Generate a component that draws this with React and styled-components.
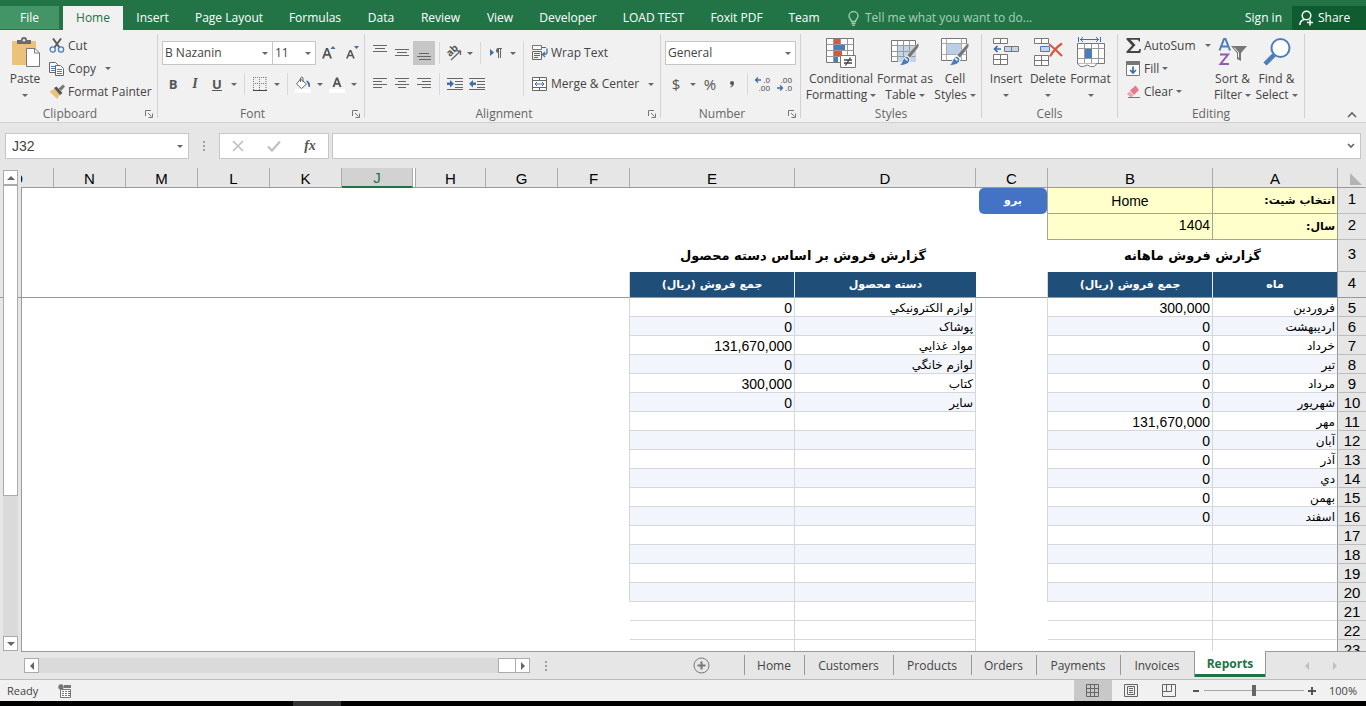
import React, { memo } from 'react';
import styled, { createGlobalStyle, css } from 'styled-components';

const GlobalStyle = createGlobalStyle`
  *, *::before, *::after {
    box-sizing: border-box;
  }
  body {
    margin: 0;
    background: #e6e6e6;
  }
  button, input, select {
    margin: 0;
    padding: 0;
    border: 0;
    border-radius: 0;
    background: none;
    color: inherit;
    font: inherit;
    outline: none;
  }
`;

const Window = styled.div`
  display: flex;
  flex-direction: column;
  height: 100vh;
  overflow: hidden;
  color: #444;
  font-family: 'Open Sans', 'Noto Sans', sans-serif;
  font-size: 12px;
  line-height: 16px;
  white-space: nowrap;
`;

/* ---------- tabs on top ---------- */

const TopBar = styled.nav`
  display: flex;
  flex: none;
  height: 30px;
  padding-top: 6px;
  background: #227447;
  color: #fff;
`;

const TopTab = styled.button`
  width: ${({ $w }) => $w}px;
  height: 24px;
  ${({ $file }) =>
    $file &&
    css`
      height: 23px;
      margin-right: 4px;
      background: #439467;
    `}
  ${({ $active }) =>
    $active &&
    css`
      background: #f1f1f1;
      color: #217346;
    `}
`;

const TellMe = styled.label`
  display: flex;
  flex: 1;
  align-items: center;
  gap: 6px;
  padding-left: 15px;
  color: #a5d0b6;

  input {
    flex: 1;
    min-width: 0;
  }
  input::placeholder {
    color: #a5d0b6;
    opacity: 1;
  }
`;

const SignIn = styled.button`
  padding: 0 10px;
`;

const Share = styled.button`
  display: flex;
  align-items: center;
  gap: 4px;
  width: 74px;
  padding-left: 7px;
  background: #0e5c2f;
`;

/* ---------- ribbon ---------- */

const RibbonBar = styled.div`
  display: flex;
  flex: none;
  height: 93px;
  padding-top: 4px;
  border-bottom: 1px solid #d2d2d2;
  background: #f1f1f1;
`;

const GroupBox = styled.section`
  display: flex;
  flex-direction: column;
  width: ${({ $w }) => $w}px;
  height: 84px;
  border-right: 1px solid #d2d2d2;
`;

const GroupBody = styled.div`
  display: flex;
  flex: none;
  height: 76px;
  padding-left: ${({ $pad }) => $pad}px;
`;

const GroupFooter = styled.div`
  display: flex;
  align-items: center;
  height: 8px;
  color: #666;

  span {
    flex: 1;
    text-align: center;
  }
  button {
    width: 17px;
    line-height: 8px;
  }
  svg {
    display: block;
    margin: 0 auto;
  }
`;

const Stack = styled.div`
  display: flex;
  flex-direction: column;
  padding-left: ${({ $pad }) => $pad || 0}px;
`;

const TwoRows = styled.div`
  display: flex;
  flex-direction: column;
  gap: 7px;
  padding: 7px 0 0 ${({ $pad }) => $pad || 0}px;
`;

const Tools = styled.div`
  display: flex;
  align-items: center;
  height: 24px;
`;

const Divider = styled.i`
  width: 1px;
  height: ${({ $h }) => $h || 22}px;
  margin: 0 4px;
  background: #d8d8d8;
`;

const IconButton = styled.button`
  display: flex;
  align-items: center;
  justify-content: center;
  width: ${({ $w }) => $w || 22}px;
  height: 24px;
  background: ${({ $on }) => ($on ? '#c6c6c6' : 'none')};
`;

const SmallButton = styled.button`
  display: flex;
  align-items: center;
  gap: 3px;
  height: ${({ $h }) => $h || 23}px;

  .caret {
    margin-left: ${({ $far }) => ($far ? 6 : 0)}px;
  }
`;

const Big = styled.button`
  display: flex;
  flex-direction: column;
  align-items: center;
  width: ${({ $w }) => $w}px;
  padding-top: 2px;

  > svg {
    margin-bottom: 3px;
  }
`;

const BigLine = styled.span`
  display: flex;
  align-items: center;
  gap: 3px;
  height: 16px;
`;

const SelectBox = styled.div`
  display: flex;
  align-items: center;
  width: ${({ $w }) => $w}px;
  height: 24px;
  padding: 0 4px 0 2px;
  border: 1px solid #c6c6c6;
  background: #fff;

  select {
    flex: 1;
    min-width: 0;
    appearance: none;
  }
  & + & {
    margin-left: -1px;
  }
`;

const Glyph = styled.b`
  color: #555;
  font-size: ${({ $size }) => $size || 13}px;
  font-weight: ${({ $light }) => ($light ? 400 : 700)};
  ${({ $serif }) =>
    $serif &&
    css`
      font-family: 'Liberation Serif', serif;
      font-style: italic;
    `}
  text-decoration: ${({ $underline }) => ($underline ? 'underline' : 'none')};
`;

const Collapse = styled.button`
  align-self: flex-end;
  margin: 0 9px 0 auto;
  height: 16px;
`;

/* ---------- formula bar ---------- */

const FormulaRow = styled.div`
  display: flex;
  flex: none;
  height: 45px;
  padding: 10px 5px 9px;
`;

const Field = styled.div`
  display: flex;
  align-items: center;
  width: ${({ $w }) => ($w ? `${$w}px` : 'auto')};
  flex: ${({ $w }) => ($w ? 'none' : 1)};
  padding: 0 5px 0 6px;
  border: 1px solid #c6c6c6;
  background: #fff;

  input {
    flex: 1;
    min-width: 0;
    font-family: 'Liberation Sans', sans-serif;
    font-size: 14px;
  }
`;

const FxField = styled(Field)`
  justify-content: space-around;
  margin-right: 3px;
  padding: 0;
`;

const Dots = styled.span`
  display: flex;
  flex-direction: column;
  align-items: center;
  justify-content: center;
  gap: 2px;
  width: ${({ $w }) => $w}px;

  i {
    width: 2px;
    height: 2px;
    background: #a0a0a0;
  }
`;

/* ---------- sheet ---------- */

const SheetArea = styled.main`
  display: flex;
  flex: 1;
  min-height: 0;
  overflow: hidden;
`;

// the grey line is the frozen pane border, it runs under the scroll bar too
const VScroll = styled.div`
  display: flex;
  flex: none;
  flex-direction: column;
  width: 21px;
  padding: 2px 3px 0;
  background: linear-gradient(#999, #999) 0 129px / 100% 1px no-repeat;
`;

const ScrollButton = styled.button`
  display: flex;
  flex: none;
  align-items: center;
  justify-content: center;
  width: 15px;
  height: 15px;
  border: 1px solid #ababab;
  background: #fff;
`;

const VTrack = styled.div`
  flex: 1;
  background: #dadada;
`;

const VThumb = styled.div`
  height: 69%;
  border: 1px solid #ababab;
  background: #fff;
`;

const GridWrap = styled.div`
  flex: 1;
  min-width: 0;
  overflow: hidden;
`;

const Grid = styled.table`
  width: 100%;
  table-layout: fixed;
  border-spacing: 0;
  color: #000;
  font-family: 'Liberation Sans', 'DejaVu Sans', sans-serif;
  font-size: 14px;
  line-height: 16px;

  th, td {
    padding: 0;
    overflow: hidden;
    font-weight: 400;
  }
`;

const ColHead = styled.th`
  && {
    padding-top: 2px;
  }
  height: 20px;
  border-right: 1px solid ${({ $corner }) => ($corner ? '#e6e6e6' : '#ababab')};
  border-bottom: 1px solid #999;
  background: #e6e6e6;
  font-size: 15px;
  text-align: center;
  ${({ $gap }) =>
    $gap &&
    css`
      background: #fff;
    `}
  ${({ $active }) =>
    $active &&
    css`
      border-bottom: 2px solid #217346;
      background: #d2d2d2;
      color: #217346;
    `}
  ${({ $cut }) =>
    $cut &&
    css`
      && {
        padding-right: 30px;
      }
      text-align: right;
    `}
  svg {
    display: block;
    margin: 0 3px 0 auto;
  }
`;

const RowHead = styled.th`
  && {
    padding: ${({ $tall }) => ($tall ? '0 0 3px' : '2px 0 0')};
  }
  height: ${({ $h }) => $h}px;
  border-bottom: 1px solid ${({ $frozen }) => ($frozen ? '#999' : '#bdbdbd')};
  background: #e6e6e6;
  font-size: 15px;
  text-align: center;
`;

const Cell = styled.td`
  border-right: ${({ $line }) => ($line ? `1px solid ${$line}` : 0)};
  border-bottom: ${({ $frozen }) => ($frozen ? '1px solid #999' : 0)};
  background: #fff;

  &:last-child {
    border-left: 1px solid #999;
  }
`;

const DataCell = styled(Cell)`
  && {
    padding: 2px 2px 0;
  }
  border-right: 1px solid ${({ $edge }) => ($edge ? '#999' : '#d4d7dc')};
  border-bottom: 1px solid #d4d7dc;
  background: ${({ $band }) => ($band ? '#f2f5fb' : '#fff')};
  font-family: ${({ $text }) => ($text ? "'DejaVu Sans', sans-serif" : 'inherit')};
  font-size: ${({ $text }) => ($text ? 12 : 14)}px;
  text-align: right;
`;

const YellowCell = styled(Cell)`
  && {
    padding: 0 2px;
    font-weight: ${({ $text }) => ($text ? 700 : 400)};
  }
  border-right: 1px solid ${({ $text }) => ($text ? '#999' : '#a6a68c')};
  border-bottom: 1px solid #a6a68c;
  background: #ffffcc;
  font-family: ${({ $text }) => ($text ? "'DejaVu Sans', sans-serif" : 'inherit')};
  font-size: ${({ $text }) => ($text ? 11 : 14)}px;
  text-align: ${({ $center }) => ($center ? 'center' : 'right')};
  vertical-align: ${({ $top }) => ($top ? 'top' : 'middle')};
`;

const YearValue = styled.div`
  padding-top: 3px;
`;

const TitleCell = styled(Cell)`
  && {
    font-weight: 700;
  }
  font-family: 'DejaVu Sans', sans-serif;
  font-size: 13px;
  text-align: center;
`;

const HeadCell = styled(Cell)`
  && {
    font-weight: 700;
  }
  background: #1f4e79;
  color: #fff;
  font-family: 'DejaVu Sans', sans-serif;
  font-size: 11px;
  text-align: center;
`;

const GoButton = styled.button`
  display: block;
  width: 68px;
  height: 26px;
  border-radius: 5px;
  background: #4472c4;
  color: #fff;
  font-family: 'DejaVu Sans', sans-serif;
  font-size: 11px;
  font-weight: 700;
`;

/* ---------- sheet tabs ---------- */

const SheetBar = styled.div`
  display: flex;
  flex: none;
  height: 28px;
  padding-left: 21px;
`;

const ScrollPart = styled.div`
  display: flex;
  flex: 1;
  align-items: center;
  padding-left: 3px;
  border-top: 1px solid #999;
`;

const ArrowsPart = styled.div`
  display: flex;
  align-items: center;
  width: 100px;
  padding-left: 27px;
  border-top: 1px solid #999;
`;

const HTrack = styled.div`
  display: flex;
  flex: 1;
  justify-content: flex-end;
  height: 15px;
  background: #dadada;
`;

const HThumb = styled.div`
  width: 17px;
  border: 1px solid #ababab;
  border-right: 0;
  background: #fff;
`;

const AddSheet = styled.button`
  display: flex;
  margin: 0 34px 0 131px;
`;

const SheetTab = styled.button`
  width: ${({ $w }) => $w}px;
  height: 28px;
  border-top: 1px solid #999;
  ${({ $active }) =>
    $active
      ? css`
          height: 26px;
          border: solid #999;
          border-width: 0 1px;
          background: #fff;
          box-shadow: inset 0 -3px 0 #217346;
          color: #217346;
          font-weight: 700;
        `
      : css`
          background: linear-gradient(#999, #999) 0 3px / 1px 20px no-repeat;
        `}
`;

const ArrowButton = styled.button`
  display: flex;
  justify-content: center;
  width: 28px;
`;

/* ---------- status bar ---------- */

const StatusBar = styled.footer`
  display: flex;
  flex: none;
  align-items: center;
  height: 22px;
  padding-left: 7px;
  border-top: 1px solid #bcbcbc;
  background: #f1f1f1;
  font-size: 11px;
`;

const StatusIcon = styled.button`
  display: flex;
  margin: 0 auto 0 20px;
`;

const ViewButton = styled.button`
  display: flex;
  align-items: center;
  justify-content: center;
  width: 38px;
  height: 21px;
  background: ${({ $on }) => ($on ? '#c8c8c8' : 'none')};
`;

const ZoomRange = styled.input`
  width: 100px;
  height: 13px;
  appearance: none;
  background: linear-gradient(#a6a6a6, #a6a6a6) 0 6px / 100% 1px no-repeat;

  &::-webkit-slider-thumb {
    appearance: none;
    width: 4px;
    height: 11px;
    background: #666;
  }
`;

const ZoomStep = styled.button`
  display: flex;
  margin: 0 4px;
`;

const ZoomValue = styled.button`
  width: 46px;
`;

const Taskbar = styled.div`
  flex: none;
  height: 5px;
  padding-left: 293px;
  background: #000;

  i {
    display: block;
    width: 48px;
    height: 5px;
    background: #333;
  }
`;

/* ---------- icons ---------- */

const Caret = () => (
  <svg className="caret" width="6" height="3" viewBox="0 0 6 3">
    <path d="M0 0h6L3 3z" fill="#666" />
  </svg>
);

const arrows = {
  up: 'M0 6h8L4 2z',
  down: 'M0 2h8L4 6z',
  left: 'M6 0v8L2 4z',
  right: 'M2 0v8l4-4z',
};

const Arrow = ({ to, color = '#666' }) => (
  <svg width="8" height="8" viewBox="0 0 8 8">
    <path d={arrows[to]} fill={color} />
  </svg>
);

const LauncherIcon = () => (
  <svg width="8" height="8" viewBox="0 0 8 8" fill="none" stroke="#777">
    <path d="M.5 6V.5H6M3 3l3.5 3.5M7.5 3.5v4h-4" />
  </svg>
);

const BulbIcon = () => (
  <svg width="11" height="15" viewBox="0 0 11 15" fill="none" stroke="#a5d0b6" strokeWidth="1.3">
    <path d="M3.5 10.5C3.5 8.5 1 7.5 1 5a4.5 4.3 0 0 1 9 0c0 2.5-2.5 3.5-2.5 5.5zM3.5 12.5h4M4.2 14.3h2.6" />
  </svg>
);

const PersonIcon = () => (
  <svg width="15" height="16" viewBox="0 0 15 16" fill="none" stroke="#fff" strokeWidth="1.5">
    <circle cx="7.5" cy="5.5" r="4.3" />
    <path d="M5.5 9.5C3 10 1 12 .8 15M8 12.5h6M11 9.5v6" />
  </svg>
);

const PasteIcon = () => (
  <svg width="30" height="32" viewBox="0 0 30 32">
    <path d="M2 5h24v24H2z" fill="#ecc27a" />
    <path d="M7 4h4a3 3 0 0 1 6 0h4v4H7z" fill="#6b6b6b" />
    <circle cx="14" cy="4.2" r="1.2" fill="#f1f1f1" />
    <path d="M16.5 12.5h8.500l4.500 4.500v13.500H16.500z" fill="#fff" stroke="#777" />
    <path d="M24.5 12.5V17H29" fill="none" stroke="#777" />
  </svg>
);

const CutIcon = () => (
  <svg width="16" height="16" viewBox="0 0 16 16" fill="none">
    <path d="M4 .5l6.500 9M12 .5L5.500 9.500" stroke="#5c5c5c" strokeWidth="2" />
    <circle cx="3.700" cy="11.500" r="2.600" stroke="#4a7ebb" strokeWidth="1.300" />
    <circle cx="12" cy="11.500" r="2.600" stroke="#4a7ebb" strokeWidth="1.300" />
  </svg>
);

const CopyIcon = () => (
  <svg width="16" height="16" viewBox="0 0 16 16" fill="#fff" stroke="#666">
    <path d="M.5 1.500h6l2 2v8h-8z" />
    <path d="M2 5.500h4M2 7.500h4M2 9.500h4" stroke="#4a7ebb" />
    <path d="M6.500 4.500h5l3 3v7h-8z" />
    <path d="M8 8.500h5M8 10.500h5M8 12.500h5" stroke="#4a7ebb" />
  </svg>
);

const PainterIcon = () => (
  <svg width="16" height="16" viewBox="0 0 16 16">
    <path d="M.5 7.500L6 4.500l5.500 5.500-3.500 5z" fill="#ecc27a" />
    <path d="M5 4L7.500 2.500l6 6.500-2.500 2z" fill="#555" />
    <path d="M9.500 4.500L14 .5l2 2-4 4.500z" fill="#777" />
  </svg>
);

const GrowIcon = ({ small }) => (
  <svg width="16" height="16" viewBox="0 0 16 16">
    {small ? (
      <path
        d="M2 13.500L5.500 5h1.800l3.500 8.500H9l-.8-2.200H4.600l-.8 2.200zm3.100-3.700h2.600L6.400 6.800z"
        fill="#555"
        fillRule="evenodd"
      />
    ) : (
      <path d="M1 13.500L5 3h2l4 10.500H9l-1-2.800H4l-1 2.800zM4.600 9h2.800L6 5z" fill="#555" fillRule="evenodd" />
    )}
    <path d={small ? 'M10 1h5l-2.500 3z' : 'M9.500 4h5L12 1z'} fill="#3c6ea8" />
  </svg>
);

const BordersIcon = () => (
  <svg width="14" height="14" viewBox="0 0 14 14" fill="none" stroke="#777">
    <path d="M0 .5h14M0 6.500h14M.5 0v13M6.500 0v13M13 0v13" strokeDasharray="1 1" />
    <path d="M0 13.500h14" stroke="#444" />
  </svg>
);

const FillColorIcon = () => (
  <svg width="16" height="17" viewBox="0 0 16 17">
    <path d="M5.500 3L11.500 8l-5 4.500L1.500 8z" fill="#fff" stroke="#666" />
    <path d="M5.500 6V2q1.500-2 2.500 0v4" fill="none" stroke="#666" />
    <path d="M11 4.500q4.500 0 4 6.500-2 .5-2-3z" fill="#3c6ea8" />
    <path d="M0 13h16v4H0z" fill="#fff" />
  </svg>
);

const FontColorIcon = () => (
  <svg width="16" height="17" viewBox="0 0 16 17">
    <path
      d="M3.500 11L7 1.500h2l3.500 9.500h-2l-.8-2.200H6.300L5.500 11zm3.400-4h2.200L8 3.700z"
      fill="#555"
      fillRule="evenodd"
    />
    <path d="M0 13h16v4H0z" fill="#fff" />
  </svg>
);

const lineSets = {
  top: 'M0 1.500h14M2 4.500h10M0 7.500h14',
  middle: 'M0 5.500h14M2 8.500h10M0 11.500h14',
  bottom: 'M2 9.500h10M0 12.500h14M2 15.500h12',
  left: 'M0 3.500h14M0 6.500h9M0 9.500h14M0 12.500h9',
  center: 'M0 3.500h14M3 6.500h8M0 9.500h14M3 12.500h8',
  right: 'M0 3.500h14M5 6.500h9M0 9.500h14M5 12.500h9',
};

const LinesIcon = ({ kind }) => (
  <svg width="14" height="18" viewBox="0 0 14 18" stroke="#666">
    <path d={lineSets[kind]} />
  </svg>
);

const IndentIcon = ({ out }) => (
  <svg width="16" height="14" viewBox="0 0 16 14">
    <path d="M0 1.500h16M8 4.500h8M8 7.500h8M8 10.500h8M0 12.500h16" stroke="#666" />
    <path d={out ? 'M0 6.800L4 3v2.500h3v2.500H4V10.500z' : 'M7 6.800L3 3v2.500H0v2.500h3V10.500z'} fill="#3c6ea8" />
  </svg>
);

const OrientationIcon = () => (
  <svg width="18" height="18" viewBox="0 0 18 18">
    <text x="1" y="10" transform="rotate(-45 7 7)" fontSize="10" fontWeight="700" fill="#555">
      ab
    </text>
    <path d="M6 16L15.500 7M11.500 7h4v4" fill="none" stroke="#666" strokeWidth="1.300" />
  </svg>
);

const DirectionIcon = () => (
  <svg width="14" height="12" viewBox="0 0 14 12">
    <path d="M1 2l4 3.500L1 9z" fill="#3c6ea8" />
    <path d="M9.500 11V1.500M11.500 11V1.500M8.500 1.500H13" stroke="#666" />
    <path d="M9.500 1a2.500 2.500 0 0 0 0 5z" fill="#666" />
  </svg>
);

const WrapIcon = () => (
  <svg width="16" height="16" viewBox="0 0 16 16" fill="none" stroke="#666">
    <path d="M.5 4.500v-4h9v4z" fill="#fff" stroke="#4a7ebb" />
    <path d="M9 2.500h5M.5 6.500h9v8h-9z" />
    <path d="M2 8.500h6M2 10.500h6M2 12.500h4" />
    <path d="M15 3.500v4q0 2-4 2M13 7l-2.500 2.500L13 12" stroke="#3c6ea8" strokeWidth="1.300" />
  </svg>
);

const MergeIcon = () => (
  <svg width="16" height="16" viewBox="0 0 16 16" fill="none" stroke="#666">
    <path d="M.5 1.500h14v13H.5zM.5 4.500h14M.5 11.500h14M7.500 1.500v3M7.500 11.500v3" fill="#fff" />
    <path d="M3 8h9M5 6L3 8l2 2M10 6l2 2-2 2" stroke="#3c6ea8" />
  </svg>
);

const CommaIcon = () => (
  <svg width="6" height="9" viewBox="0 0 6 9">
    <path d="M3 1a2 2 0 0 1 2 2q0 3-3.500 4.500l-.3-.8Q3 6 3 5a2 2 0 0 1 0-4z" fill="#555" />
  </svg>
);

const DecimalIcon = ({ more }) => (
  <svg width="18" height="20" viewBox="0 0 18 20" fontSize="8" fill="#444">
    <text x="16" y="9" textAnchor="end">
      {more ? '.0' : '.00'}
    </text>
    <text x="16" y="17" textAnchor="end">
      {more ? '.00' : '.0'}
    </text>
    <path
      d={more ? 'M7 6H1.500M4 3.500L1.500 6 4 8.500' : 'M1 14h5.500M4 11.500L6.500 14 4 16.500'}
      fill="none"
      stroke="#3c6ea8"
      strokeWidth="1.300"
    />
  </svg>
);

const ConditionalIcon = () => (
  <svg width="30" height="32" viewBox="0 0 30 32">
    <path d="M.5 2.500h27v24H.5z" fill="#fff" stroke="#777" />
    <path d="M.5 8.500h27M.5 14.500h27M.5 20.500h27M7.500 2.500v24M14.500 2.500v24M21.500 2.500v24" stroke="#999" />
    <path d="M8 3h6v5H8zM8 15h8v5H8z" fill="#d35a3c" />
    <path d="M8 9h11v5H8zM8 21h4v5H8z" fill="#4a7ebb" />
    <path d="M14.500 19.500h15v12h-15z" fill="#fff" stroke="#777" />
    <path d="M18 24h8M18 27h8M24.500 21.500l-5 8" stroke="#444" strokeWidth="1.300" />
  </svg>
);

const Brush = () => (
  <g>
    <path d="M29 7q2 2 0 5l-8 10-3-3z" fill="#777" stroke="#f1f1f1" strokeWidth=".6" />
    <path d="M18 20l3 3q0 7-12 6.500 4-1.500 4.500-5 1-3.500 4.500-4.500z" fill="#4a7ebb" stroke="#f1f1f1" />
    <path d="M16 22l2.500 2.500" stroke="#fff" strokeWidth="1.500" />
  </g>
);

const TableIcon = () => (
  <svg width="32" height="32" viewBox="0 0 32 32">
    <path d="M2.500 4.500h24v21h-24z" fill="#fff" stroke="#777" />
    <path d="M9 10h18v16H9z" fill="#c3d3e8" />
    <path d="M2.500 9.500h24M2.500 15.500h24M2.500 20.500h24M8.500 4.500v21M14.500 4.500v21M20.500 4.500v21" stroke="#999" />
    <Brush />
  </svg>
);

const CellStylesIcon = () => (
  <svg width="32" height="32" viewBox="0 0 32 32">
    <path d="M2.500 2.500h25v22h-25z" fill="#fff" stroke="#777" />
    <path d="M2.500 7.500h25M2.500 18.500h25M7.500 2.500v22M22.500 2.500v22" stroke="#aaa" />
    <path d="M8 8h14v10H8z" fill="#b9cfe8" />
    <Brush />
  </svg>
);

const InsertIcon = () => (
  <svg width="28" height="32" viewBox="0 0 28 32">
    <path
      d="M1.500 2.500h14v5h-14zM8.500 2.500v5M1.500 18.500h14v10h-14zM1.500 23.500h14M8.500 18.500v10"
      fill="#fff"
      stroke="#777"
    />
    <path d="M12.500 10.500h14v5h-14zM19.500 10.500v5" fill="#c3d3e8" stroke="#777" />
    <path d="M9 13H3M5.500 10L2.500 13l3 3" fill="none" stroke="#3c6ea8" strokeWidth="1.700" />
  </svg>
);

const DeleteIcon = () => (
  <svg width="30" height="32" viewBox="0 0 30 32">
    <path
      d="M1.500 2.500h14v5h-14zM8.500 2.500v5M1.500 19.500h14v10h-14zM1.500 24.500h14M8.500 19.500v10"
      fill="#fff"
      stroke="#777"
    />
    <path d="M7.500 10.500h9v5h-9z" fill="#c3d3e8" stroke="#4a7ebb" />
    <path d="M16 8q6 5 13 12M29 7.500q-7 4.500-12 13" fill="none" stroke="#d8573c" strokeWidth="2.200" />
  </svg>
);

const FormatIcon = () => (
  <svg width="30" height="32" viewBox="0 0 30 32">
    <path d="M1.500 7.500h27v20h-27z" fill="#fff" stroke="#777" />
    <path d="M1.500 12.500h27M1.500 22.500h27M8.500 7.500v20M15.500 7.500v20M22.500 7.500v20" stroke="#999" />
    <path d="M9 13h7v9H9z" fill="#4a7ebb" />
    <path d="M1.500 27.500q2 4 6 3l4-1.500 3 1.500q5 1 6-3" fill="#fff" stroke="#777" />
    <path d="M2.500 1v5M24.500 1v5M4 3.500h19M7 1L4.500 3.500 7 6M20 1l2.500 2.500L20 6" fill="none" stroke="#3c6ea8" />
  </svg>
);

const SumIcon = () => (
  <svg width="15" height="15" viewBox="0 0 15 15">
    <path
      d="M.5 0h13.500v3.500h-1l-1-1.700H4.500L9.500 7l-5.500 6h8.500l1-2H15l-.7 4H.5v-1.500L6 7.500.5 1.500z"
      fill="#444"
    />
  </svg>
);

const FillIcon = () => (
  <svg width="15" height="16" viewBox="0 0 15 16">
    <path d="M.5.5h13v14H.5z" fill="#fff" stroke="#777" />
    <path d="M0 0h14v4H0z" fill="#777" />
    <path d="M7 5.500V12M4 9l3 3 3-3" fill="none" stroke="#3c6ea8" strokeWidth="1.700" />
  </svg>
);

const ClearIcon = () => (
  <svg width="15" height="14" viewBox="0 0 15 14">
    <path d="M4 5.500L9.500.5l3.500 4.500-5 5z" fill="#e8788c" />
    <path d="M3.500 6.500L7.500 10.500 5 12.500 1 9z" fill="#f0a0ae" />
    <path d="M2 12.500h12" stroke="#777" />
  </svg>
);

const SortIcon = () => (
  <svg width="30" height="32" viewBox="0 0 30 32">
    <path d="M1.500 14.500L6 3h1.500L12 14.500M3.200 10.500h7" fill="none" stroke="#4a7ebb" strokeWidth="2" />
    <path d="M2 18.500h8L2.500 28H11" fill="none" stroke="#8f5bb5" strokeWidth="2" />
    <path d="M13 10h16l-6 7v8l-4-2v-6z" fill="#777" />
    <path d="M16 11.500l4.500 5v5" stroke="#f1f1f1" fill="none" />
  </svg>
);

const FindIcon = () => (
  <svg width="30" height="32" viewBox="0 0 30 32">
    <path d="M12 19L3 28" stroke="#4a7ebb" strokeWidth="4.500" />
    <circle cx="18.500" cy="12" r="9" fill="#fff" stroke="#4a7ebb" strokeWidth="2" />
  </svg>
);

const MacroIcon = () => (
  <svg width="14" height="14" viewBox="0 0 14 14">
    <path d="M2.500 5.500h10v8h-10z" fill="#fff" stroke="#777" />
    <path d="M6 1h7v3H6z" fill="#777" />
    <circle cx="3" cy="3" r="2.700" fill="#777" />
    <path d="M4 7.500h8M4 9.500h8M4 11.500h8" stroke="#777" strokeDasharray="2 1" />
  </svg>
);

const viewPaths = {
  normal: 'M.5.5h12v12H.5zM.5 4.500h12M.5 8.500h12M4.500.5v12M8.500.5v12',
  layout: 'M.5.5h13v12H.5zM3.500 2.500h7v8h-7zM5 4.500h4M5 6.500h4M5 8.500h4',
  breaks: 'M.5.5h13v12H.5zM4.500.5v7M9.500.5v7M.5 7.500h9',
};

const ViewIcon = ({ kind }) => (
  <svg width="14" height="13" viewBox="0 0 14 13" fill="none" stroke="#666">
    <path d={viewPaths[kind]} />
  </svg>
);

/* ---------- data ---------- */

const topTabs = [
  { name: 'File', w: 59, file: true },
  { name: 'Home', w: 60, active: true },
  { name: 'Insert', w: 59 },
  { name: 'Page Layout', w: 94 },
  { name: 'Formulas', w: 78 },
  { name: 'Data', w: 54 },
  { name: 'Review', w: 65 },
  { name: 'View', w: 54 },
  { name: 'Developer', w: 82 },
  { name: 'LOAD TEST', w: 89 },
  { name: 'Foxit PDF', w: 77 },
  { name: 'Team', w: 58 },
];

const columns = [
  { name: 'A', w: 125 },
  { name: 'B', w: 165 },
  { name: 'C', w: 72 },
  { name: 'D', w: 181 },
  { name: 'E', w: 165 },
  { name: 'F', w: 72 },
  { name: 'G', w: 72 },
  { name: 'H', w: 70 },
  { name: '', w: 3, gap: true },
  { name: 'J', w: 71, active: true },
  { name: 'K', w: 72 },
  { name: 'L', w: 72 },
  { name: 'M', w: 72 },
  { name: 'N', w: 72 },
  { name: 'O', cut: true },
];

const months = [
  ['فروردين', '300,000'],
  ['ارديبهشت', '0'],
  ['خرداد', '0'],
  ['تير', '0'],
  ['مرداد', '0'],
  ['شهريور', '0'],
  ['مهر', '131,670,000'],
  ['آبان', '0'],
  ['آذر', '0'],
  ['دي', '0'],
  ['بهمن', '0'],
  ['اسفند', '0'],
];

const categories = [
  ['لوازم الکترونيکي', '0'],
  ['پوشاک', '0'],
  ['مواد غذايي', '131,670,000'],
  ['لوازم خانگي', '0'],
  ['کتاب', '300,000'],
  ['ساير', '0'],
];

const sheets = [
  { name: 'Home', w: 60 },
  { name: 'Customers', w: 89 },
  { name: 'Products', w: 78 },
  { name: 'Orders', w: 65 },
  { name: 'Payments', w: 84 },
  { name: 'Invoices', w: 74 },
  { name: 'Reports', w: 72, active: true },
];

/* ---------- parts ---------- */

function Group({ name, w, pad, launcher, children }) {
  return (
    <GroupBox $w={w} aria-label={name}>
      <GroupBody $pad={pad}>{children}</GroupBody>
      <GroupFooter>
        <span>{name}</span>
        {launcher && (
          <button aria-label={`${name} settings`}>
            <LauncherIcon />
          </button>
        )}
      </GroupFooter>
    </GroupBox>
  );
}

function BigButton({ icon, w, first, second }) {
  return (
    <Big $w={w}>
      {icon}
      <BigLine>{first}</BigLine>
      <BigLine>
        {second}
        <Caret />
      </BigLine>
    </Big>
  );
}

const DropCaret = ({ label }) => (
  <IconButton $w={12} aria-label={label}>
    <Caret />
  </IconButton>
);

function Ribbon() {
  return (
    <RibbonBar>
      <Group name="Clipboard" w={158} pad={5} launcher>
        <BigButton icon={<PasteIcon />} w={40} first="Paste" />
        <Stack $pad={4}>
          <SmallButton>
            <CutIcon />
            Cut
          </SmallButton>
          <SmallButton $far>
            <CopyIcon />
            Copy
            <Caret />
          </SmallButton>
          <SmallButton>
            <PainterIcon />
            Format Painter
          </SmallButton>
        </Stack>
      </Group>

      <Group name="Font" w={207} pad={4} launcher>
        <TwoRows>
          <Tools>
            <SelectBox $w={111}>
              <select aria-label="Font">
                <option>B Nazanin</option>
              </select>
              <Caret />
            </SelectBox>
            <SelectBox $w={44}>
              <select aria-label="Font size">
                <option>11</option>
              </select>
              <Caret />
            </SelectBox>
            <IconButton aria-label="Grow font" $w={26}>
              <GrowIcon />
            </IconButton>
            <IconButton aria-label="Shrink font" $w={20}>
              <GrowIcon small />
            </IconButton>
          </Tools>
          <Tools>
            <IconButton>
              <Glyph>B</Glyph>
            </IconButton>
            <IconButton>
              <Glyph $serif $size={14}>
                I
              </Glyph>
            </IconButton>
            <IconButton>
              <Glyph $underline>U</Glyph>
            </IconButton>
            <DropCaret label="Underline styles" />
            <Divider />
            <IconButton aria-label="Borders">
              <BordersIcon />
            </IconButton>
            <DropCaret label="Border styles" />
            <Divider />
            <IconButton aria-label="Fill color">
              <FillColorIcon />
            </IconButton>
            <DropCaret label="Fill colors" />
            <IconButton aria-label="Font color">
              <FontColorIcon />
            </IconButton>
            <DropCaret label="Font colors" />
          </Tools>
        </TwoRows>
      </Group>

      <Group name="Alignment" w={296} pad={4} launcher>
        <TwoRows>
          <Tools>
            <IconButton aria-label="Top align">
              <LinesIcon kind="top" />
            </IconButton>
            <IconButton aria-label="Middle align">
              <LinesIcon kind="middle" />
            </IconButton>
            <IconButton aria-label="Bottom align" $on>
              <LinesIcon kind="bottom" />
            </IconButton>
            <Divider />
            <IconButton aria-label="Orientation" $w={20}>
              <OrientationIcon />
            </IconButton>
            <DropCaret label="Orientations" />
            <Divider />
            <IconButton aria-label="Text direction">
              <DirectionIcon />
            </IconButton>
            <DropCaret label="Text directions" />
          </Tools>
          <Tools>
            <IconButton aria-label="Align left">
              <LinesIcon kind="left" />
            </IconButton>
            <IconButton aria-label="Center">
              <LinesIcon kind="center" />
            </IconButton>
            <IconButton aria-label="Align right">
              <LinesIcon kind="right" />
            </IconButton>
            <Divider />
            <IconButton aria-label="Increase indent">
              <IndentIcon />
            </IconButton>
            <IconButton aria-label="Decrease indent">
              <IndentIcon out />
            </IconButton>
          </Tools>
        </TwoRows>
        <TwoRows>
          <Divider $h={55} />
        </TwoRows>
        <TwoRows $pad={4}>
          <SmallButton $h={24}>
            <WrapIcon />
            Wrap Text
          </SmallButton>
          <SmallButton $h={24} $far>
            <MergeIcon />
            Merge &amp; Center
            <Caret />
          </SmallButton>
        </TwoRows>
      </Group>

      <Group name="Number" w={140} pad={4} launcher>
        <TwoRows>
          <Tools>
            <SelectBox $w={131}>
              <select aria-label="Number format">
                <option>General</option>
              </select>
              <Caret />
            </SelectBox>
          </Tools>
          <Tools>
            <IconButton>
              <Glyph $light $size={15}>
                $
              </Glyph>
            </IconButton>
            <DropCaret label="Currencies" />
            <IconButton>
              <Glyph $light $size={15}>
                %
              </Glyph>
            </IconButton>
            <IconButton aria-label="Comma style">
              <CommaIcon />
            </IconButton>
            <Divider />
            <IconButton aria-label="Increase decimal">
              <DecimalIcon more />
            </IconButton>
            <IconButton aria-label="Decrease decimal">
              <DecimalIcon />
            </IconButton>
          </Tools>
        </TwoRows>
      </Group>

      <Group name="Styles" w={181} pad={4}>
        <BigButton icon={<ConditionalIcon />} w={72} first="Conditional" second="Formatting" />
        <BigButton icon={<TableIcon />} w={56} first="Format as" second="Table" />
        <BigButton icon={<CellStylesIcon />} w={44} first="Cell" second="Styles" />
      </Group>

      <Group name="Cells" w={136} pad={3}>
        <BigButton icon={<InsertIcon />} w={42} first="Insert" />
        <BigButton icon={<DeleteIcon />} w={42} first="Delete" />
        <BigButton icon={<FormatIcon />} w={43} first="Format" />
      </Group>

      <Group name="Editing" w={187} pad={8}>
        <Stack>
          <SmallButton $far>
            <SumIcon />
            AutoSum
            <Caret />
          </SmallButton>
          <SmallButton>
            <FillIcon />
            Fill
            <Caret />
          </SmallButton>
          <SmallButton>
            <ClearIcon />
            Clear
            <Caret />
          </SmallButton>
        </Stack>
        <BigButton icon={<SortIcon />} w={44} first="Sort &amp;" second="Filter" />
        <BigButton icon={<FindIcon />} w={44} first="Find &amp;" second="Select" />
      </Group>

      <Collapse aria-label="Collapse the ribbon">
        <svg width="10" height="7" viewBox="0 0 10 7">
          <path d="M1 6l4-4 4 4" fill="none" stroke="#666" strokeWidth="1.700" />
        </svg>
      </Collapse>
    </RibbonBar>
  );
}

function FormulaBar() {
  return (
    <FormulaRow>
      <Field $w={184}>
        <input aria-label="Name box" defaultValue="J32" />
        <Caret />
      </Field>
      <Dots $w={30}>
        <i />
        <i />
        <i />
      </Dots>
      <FxField $w={110}>
        <IconButton aria-label="Cancel">
          <svg width="12" height="12" viewBox="0 0 12 12">
            <path d="M1 1l10 10M11 1L1 11" stroke="#c0c0c0" strokeWidth="1.700" />
          </svg>
        </IconButton>
        <IconButton aria-label="Enter">
          <svg width="14" height="12" viewBox="0 0 14 12">
            <path d="M1 6.500l4 4L13 1.500" fill="none" stroke="#c0c0c0" strokeWidth="2.200" />
          </svg>
        </IconButton>
        <IconButton>
          <Glyph $serif $size={14}>
            fx
          </Glyph>
        </IconButton>
      </FxField>
      <Field>
        <input aria-label="Formula" />
        <svg width="8" height="6" viewBox="0 0 8 6">
          <path d="M1 1l3 3 3-3" fill="none" stroke="#666" strokeWidth="1.700" />
        </svg>
      </Field>
    </FormulaRow>
  );
}

// Columns F..O hold nothing in this sheet
const Blank = ({ frozen, line }) =>
  columns.slice(5).map((c, i) => <Cell key={c.name} $frozen={frozen} $line={i === 0 && line} />);

function Sheet() {
  const rows = Array.from({ length: 19 }, (_, i) => i);

  return (
    <Grid dir="rtl">
      <colgroup>
        <col width="28" />
        {columns.map(c => (
          <col key={c.name} width={c.w} />
        ))}
      </colgroup>
      <thead>
        <tr>
          <ColHead $corner>
            <svg width="12" height="12" viewBox="0 0 12 12">
              <path d="M0 0v12h12z" fill="#b4b4b4" />
            </svg>
          </ColHead>
          {columns.map(c => (
            <ColHead key={c.name} $active={c.active} $gap={c.gap} $cut={c.cut}>
              {c.name}
            </ColHead>
          ))}
        </tr>
      </thead>
      <tbody>
        <tr>
          <RowHead $h={26} $tall>
            1
          </RowHead>
          <YellowCell $text>انتخاب شيت:</YellowCell>
          <YellowCell $center>Home</YellowCell>
          <Cell $line="#a6a68c">
            <GoButton>برو</GoButton>
          </Cell>
          <Cell />
          <Cell />
          <Blank />
        </tr>
        <tr>
          <RowHead $h={26} $tall>
            2
          </RowHead>
          <YellowCell $text>سال:</YellowCell>
          <YellowCell $top>
            <YearValue>1404</YearValue>
          </YellowCell>
          <Cell $line="#a6a68c" />
          <Cell />
          <Cell />
          <Blank />
        </tr>
        <tr>
          <RowHead $h={32} $tall>
            3
          </RowHead>
          <TitleCell colSpan={2} $line="#999">
            گزارش فروش ماهانه
          </TitleCell>
          <Cell />
          <TitleCell colSpan={2}>گزارش فروش بر اساس دسته محصول</TitleCell>
          <Blank />
        </tr>
        <tr>
          <RowHead $h={26} $tall $frozen>
            4
          </RowHead>
          <HeadCell $frozen $line="#999">
            ماه
          </HeadCell>
          <HeadCell $frozen $line="#e6ecf2">
            جمع فروش (ریال)
          </HeadCell>
          <Cell $frozen $line="#d4d7dc" />
          <HeadCell $frozen>دسته محصول</HeadCell>
          <HeadCell $frozen $line="#e6ecf2">
            جمع فروش (ریال)
          </HeadCell>
          <Blank frozen line="#d4d7dc" />
        </tr>
        {rows.map(i => {
          const inTable = i < 16;
          const band = inTable && i % 2 === 1;
          const line = inTable ? '#d4d7dc' : '#fff';
          const month = months[i] || [];
          const category = categories[i] || [];
          return (
            <tr key={i}>
              <RowHead $h={19}>{i + 5}</RowHead>
              <DataCell $text $edge $band={band}>
                {month[0]}
              </DataCell>
              <DataCell $band={band}>{month[1]}</DataCell>
              <Cell $line={line} />
              <DataCell $text $band={band}>
                {category[0]}
              </DataCell>
              <DataCell $band={band}>{category[1]}</DataCell>
              <Blank line={line} />
            </tr>
          );
        })}
      </tbody>
    </Grid>
  );
}

function App() {
  return (
    <Window>
      <GlobalStyle />
      <TopBar>
        {topTabs.map(t => (
          <TopTab key={t.name} $w={t.w} $file={t.file} $active={t.active}>
            {t.name}
          </TopTab>
        ))}
        <TellMe>
          <BulbIcon />
          <input aria-label="Tell me" placeholder="Tell me what you want to do..." />
        </TellMe>
        <SignIn>Sign in</SignIn>
        <Share>
          <PersonIcon />
          Share
        </Share>
      </TopBar>

      <Ribbon />
      <FormulaBar />

      <SheetArea>
        <VScroll>
          <ScrollButton aria-label="Scroll up">
            <Arrow to="up" />
          </ScrollButton>
          <VTrack>
            <VThumb />
          </VTrack>
          <ScrollButton aria-label="Scroll down">
            <Arrow to="down" />
          </ScrollButton>
        </VScroll>
        <GridWrap>
          <Sheet />
        </GridWrap>
      </SheetArea>

      <SheetBar>
        <ScrollPart>
          <ScrollButton aria-label="Scroll left">
            <Arrow to="left" />
          </ScrollButton>
          <HTrack>
            <HThumb />
          </HTrack>
          <ScrollButton aria-label="Scroll right">
            <Arrow to="right" />
          </ScrollButton>
          <Dots $w={32}>
            <i />
            <i />
            <i />
          </Dots>
          <AddSheet aria-label="New sheet">
            <svg width="17" height="17" viewBox="0 0 17 17" fill="none" stroke="#777">
              <circle cx="8.500" cy="8.500" r="7.500" />
              <path d="M8.500 4.500v8M4.500 8.500h8" strokeWidth="2" />
            </svg>
          </AddSheet>
        </ScrollPart>
        {sheets.map(s => (
          <SheetTab key={s.name} $w={s.w} $active={s.active}>
            {s.name}
          </SheetTab>
        ))}
        <ArrowsPart>
          <ArrowButton aria-label="Previous sheets">
            <Arrow to="left" color="#c0c0c0" />
          </ArrowButton>
          <ArrowButton aria-label="Next sheets">
            <Arrow to="right" color="#c0c0c0" />
          </ArrowButton>
        </ArrowsPart>
      </SheetBar>

      <StatusBar>
        Ready
        <StatusIcon aria-label="Record macro">
          <MacroIcon />
        </StatusIcon>
        <ViewButton aria-label="Normal" $on>
          <ViewIcon kind="normal" />
        </ViewButton>
        <ViewButton aria-label="Page layout">
          <ViewIcon kind="layout" />
        </ViewButton>
        <ViewButton aria-label="Page break preview">
          <ViewIcon kind="breaks" />
        </ViewButton>
        <ZoomStep aria-label="Zoom out">
          <svg width="8" height="8" viewBox="0 0 8 8">
            <path d="M1 4h6" stroke="#555" strokeWidth="2" />
          </svg>
        </ZoomStep>
        <ZoomRange type="range" aria-label="Zoom" min="0" max="100" defaultValue="50" />
        <ZoomStep aria-label="Zoom in">
          <svg width="8" height="8" viewBox="0 0 8 8">
            <path d="M0 4h8M4 0v8" stroke="#555" strokeWidth="2" />
          </svg>
        </ZoomStep>
        <ZoomValue>100%</ZoomValue>
      </StatusBar>
      <Taskbar>
        <i />
      </Taskbar>
    </Window>
  );
}

export default memo(App);
